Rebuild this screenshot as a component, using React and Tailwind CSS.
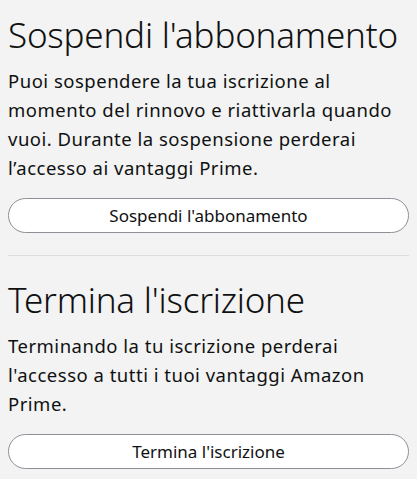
import React from 'react';

const Section = ({ title, lines, action }) => (
  <section className="flex flex-col">
    <h2 className="text-[35px] leading-[44px] font-light text-[#0f1111] tracking-[-0.2px]">{title}</h2>
    <p className="mt-[9px] text-[18.5px] leading-[29px] tracking-[0.5px] text-[#0f1111]">
      {lines.map((line) => (
        <span key={line} className="block whitespace-nowrap">
          {line}
        </span>
      ))}
    </p>
    <button
      type="button"
      className="mt-[16px] h-[35px] w-full rounded-full border border-[#8d9096] bg-white text-[17px] text-[#0f1111]"
    >
      {action}
    </button>
  </section>
);

export default function App() {
  return (
    <div
      className="min-h-[479px] w-full bg-[#f3f3f3] px-[8px] pt-[13px] pb-[10px]"
      style={{ fontFamily: '"Noto Sans", "Open Sans", sans-serif' }}
    >
      <Section
        title="Sospendi l'abbonamento"
        lines={[
          'Puoi sospendere la tua iscrizione al',
          'momento del rinnovo e riattivarla quando',
          'vuoi. Durante la sospensione perderai',
          'l’accesso ai vantaggi Prime.',
        ]}
        action="Sospendi l'abbonamento"
      />
      <div className="mt-[22px] mb-[22px] h-px bg-[#dddddd]" />
      <Section
        title="Termina l'iscrizione"
        lines={[
          'Terminando la tu iscrizione perderai',
          "l'accesso a tutti i tuoi vantaggi Amazon",
          'Prime.',
        ]}
        action="Termina l'iscrizione"
      />
    </div>
  );
}
